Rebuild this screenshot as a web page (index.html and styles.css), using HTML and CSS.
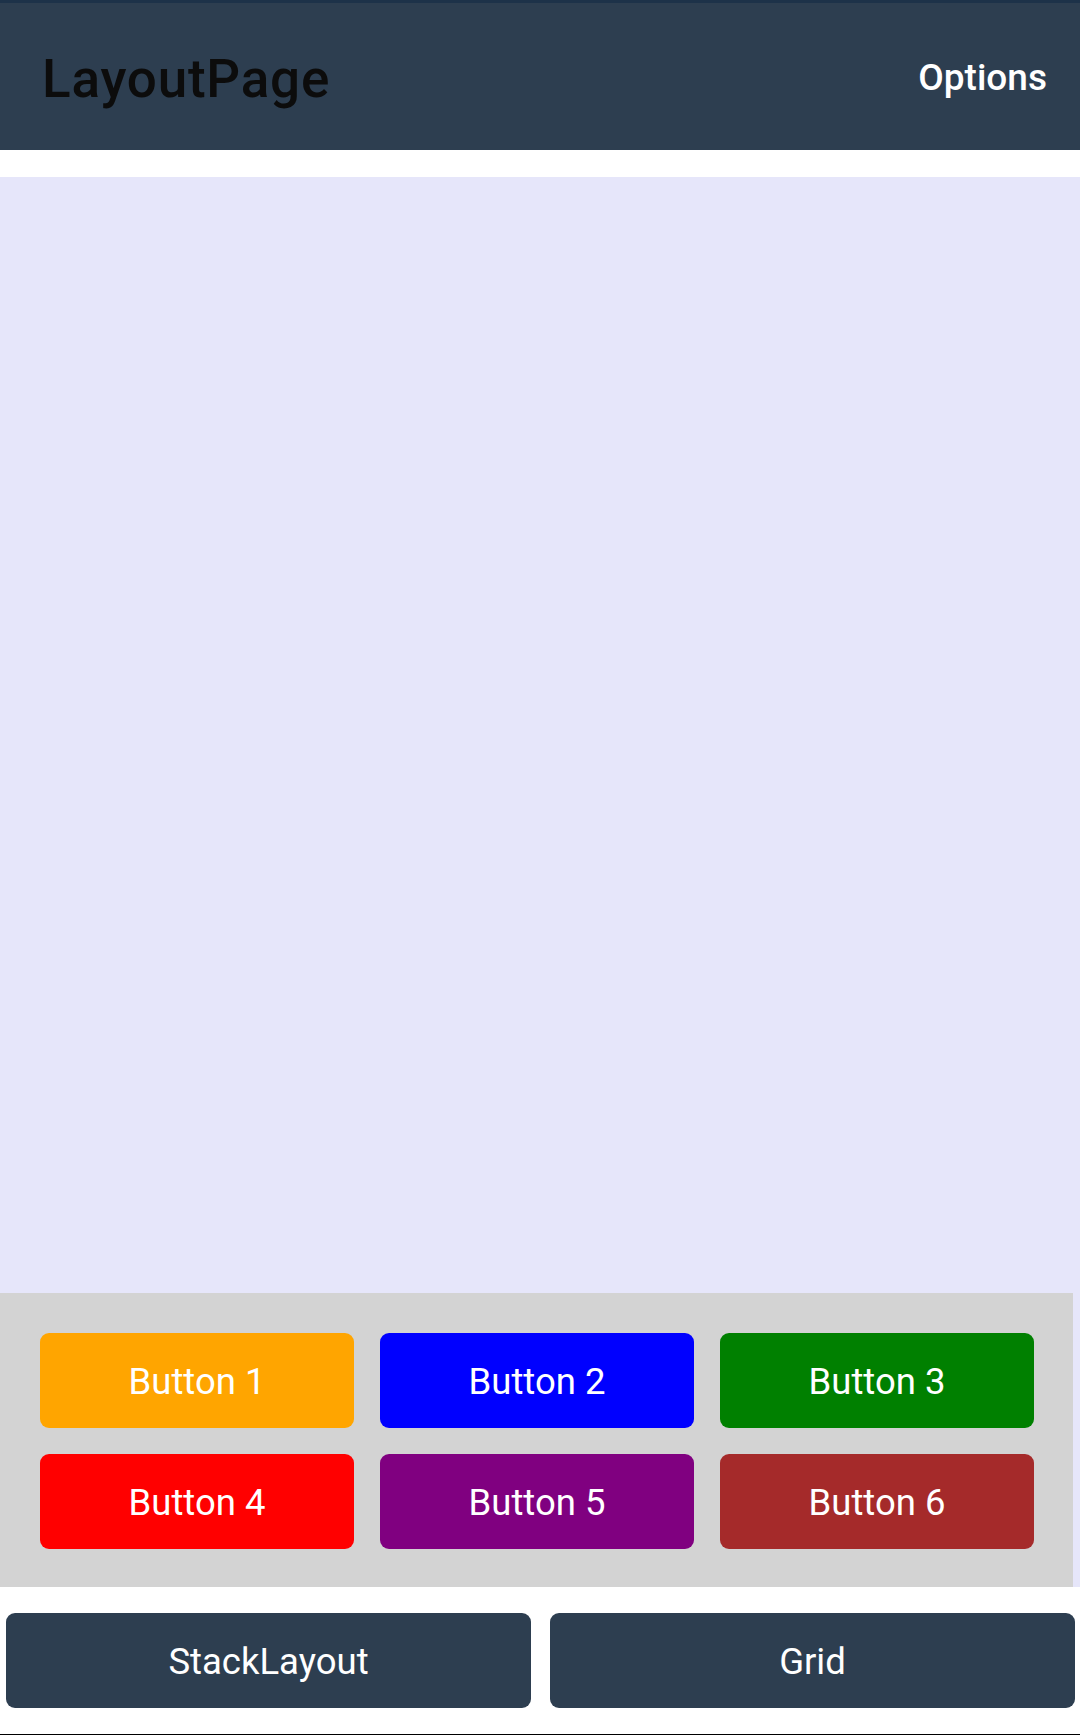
FILE: index.html
```html
<!DOCTYPE html>
<html>
<head>
<meta charset="utf-8">
<link rel="stylesheet" href="styles.css">
</head>
<body>
<div class="topline"></div>
<header class="header">
  <div class="title">LayoutPage</div>
  <div class="options">Options</div>
</header>
<div class="gap-top"></div>
<main class="main">
  <div class="grid">
    <div class="btn orange">Button 1</div>
    <div class="btn blue">Button 2</div>
    <div class="btn green">Button 3</div>
    <div class="btn red">Button 4</div>
    <div class="btn purple">Button 5</div>
    <div class="btn brown">Button 6</div>
  </div>
</main>
<nav class="footer">
  <div class="btn dark">StackLayout</div>
  <div class="btn dark">Grid</div>
</nav>
<div class="fill"></div>
<div class="bottomline"></div>
</body>
</html>
```
FILE: styles.css
```css
html, body {
  margin: 0;
  padding: 0;
  background: #ffffff;
  font-family: Roboto, "Noto Sans", sans-serif;
}
body {
  width: 1080px;
  height: 1735px;
  display: flex;
  flex-direction: column;
  overflow: hidden;
}
.topline {
  height: 3px;
  background: #1d3249;
}
.header {
  height: 147px;
  background: #2d3e50;
  display: flex;
  align-items: center;
  justify-content: space-between;
  padding: 0 33px 0 42px;
  box-sizing: border-box;
}
.title {
  font-size: 53px;
  font-weight: 500;
  letter-spacing: 0.8px;
  color: #0c0c0c;
  line-height: 1;
  margin-top: 6px;
}
.options {
  font-size: 37px;
  font-weight: 500;
  color: #ffffff;
  line-height: 1;
  margin-top: 1px;
}
.gap-top {
  height: 27px;
}
.main {
  height: 1410px;
  background: #e6e6fa;
  display: flex;
  flex-direction: column;
  justify-content: flex-end;
}
.grid {
  width: 1073px;
  height: 294px;
  box-sizing: border-box;
  background: #d3d3d3;
  padding: 40px 39px 38px 40px;
  display: grid;
  grid-template-columns: repeat(3, 314px);
  grid-template-rows: 95px 95px;
  column-gap: 26px;
  row-gap: 26px;
}
.btn {
  border-radius: 9px;
  display: flex;
  align-items: center;
  justify-content: center;
  color: #ffffff;
  font-size: 36.5px;
  line-height: 1;
  padding-top: 3px;
  box-sizing: border-box;
}
.orange { background: #ffa500; }
.blue { background: #0000ff; }
.green { background: #008000; }
.red { background: #ff0000; }
.purple { background: #800080; }
.brown { background: #a52a2a; }
.dark { background: #2d3e50; }
.footer {
  padding: 26px 6px 0 6px;
  display: grid;
  grid-template-columns: 525px 525px;
  column-gap: 19px;
  grid-template-rows: 95px;
}
.fill {
  flex: 1;
}
.bottomline {
  height: 1px;
  background: #000000;
}
```
